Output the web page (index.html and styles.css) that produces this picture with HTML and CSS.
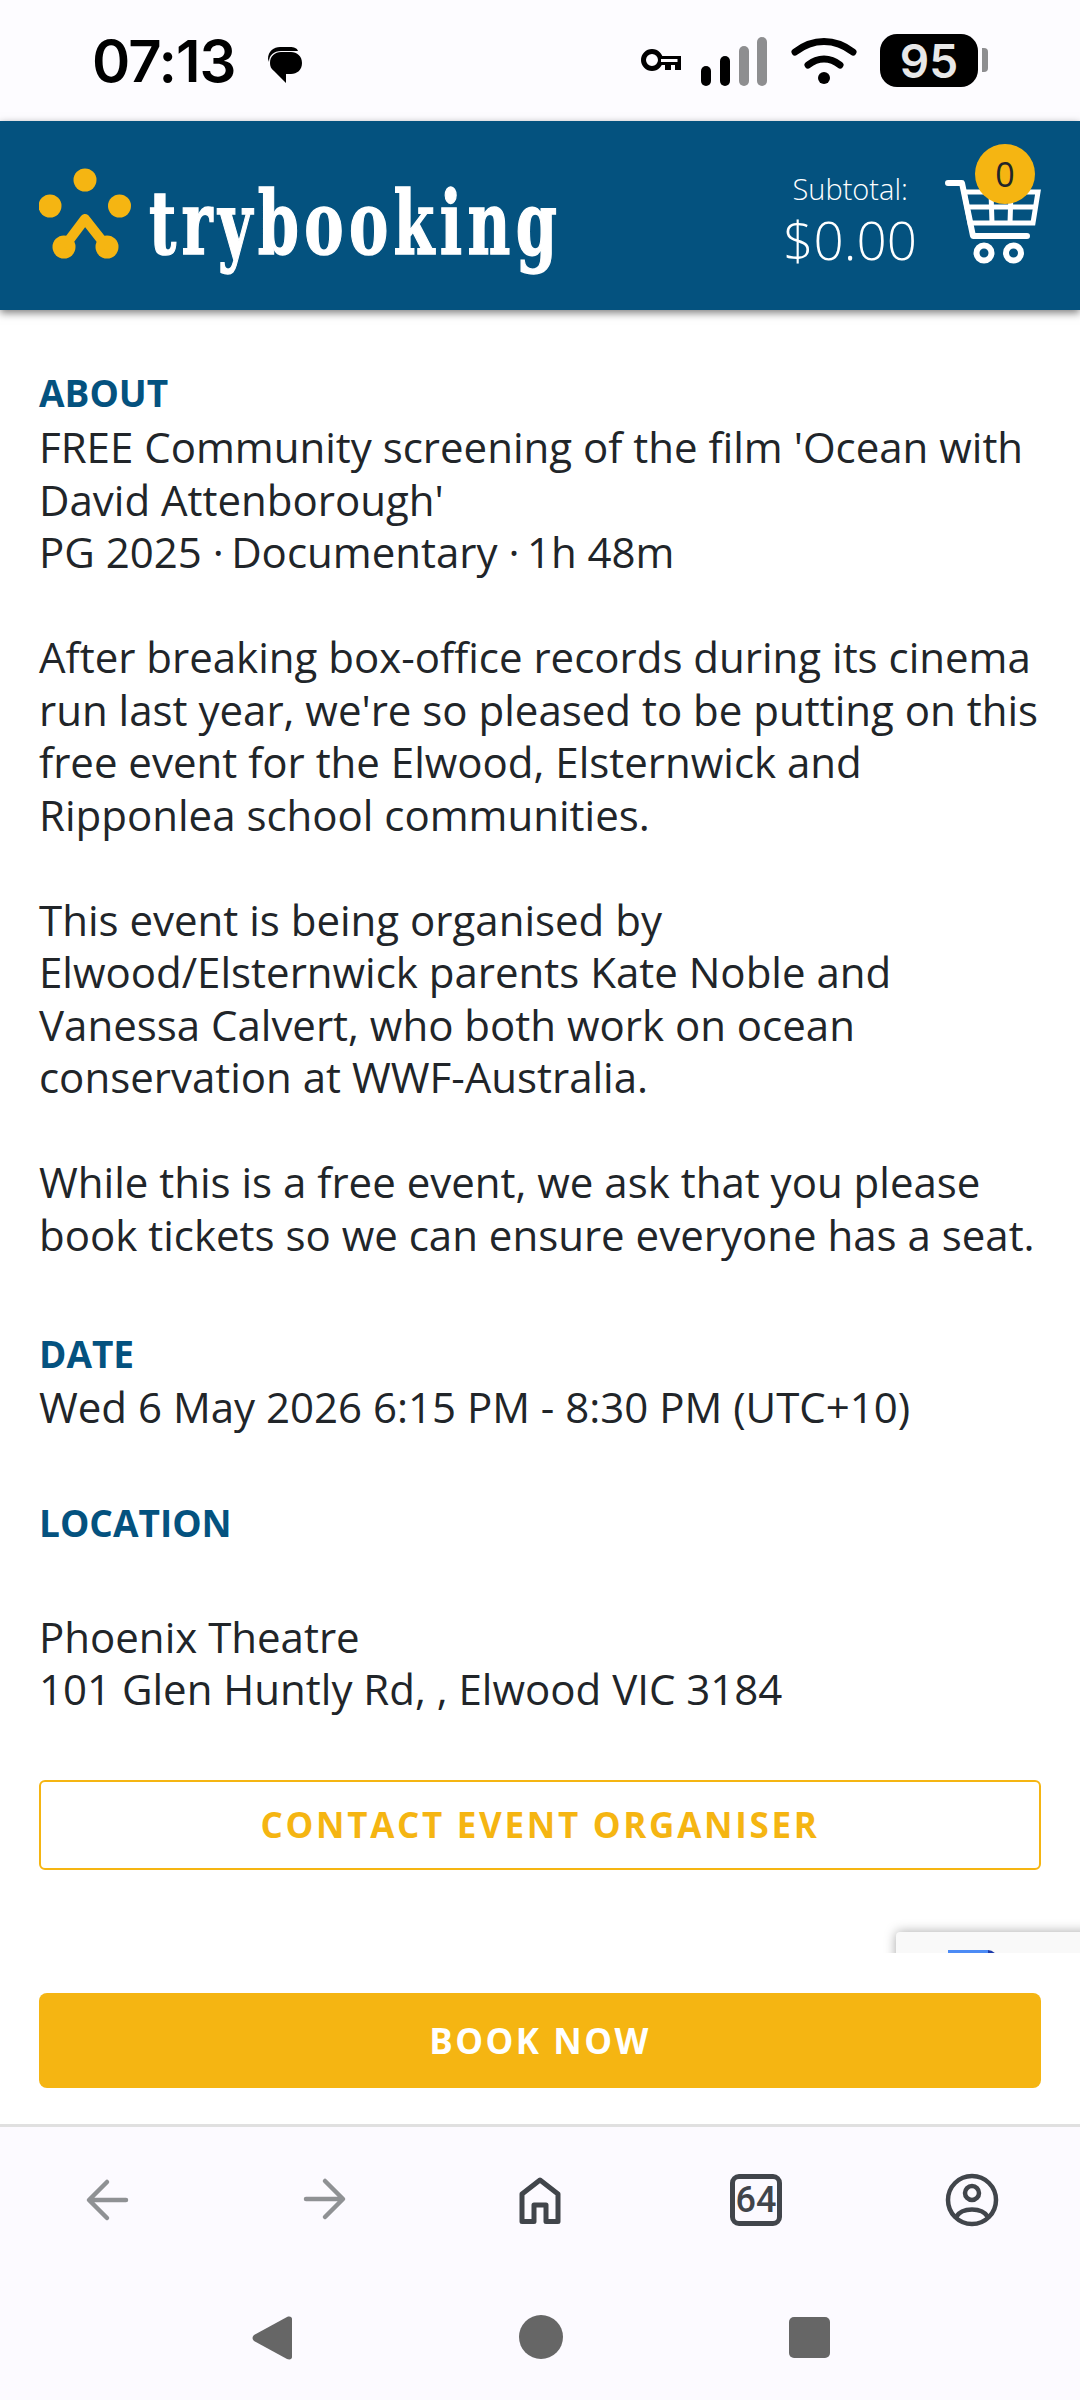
FILE: index.html
```html
<!DOCTYPE html>
<html>
<head>
    <meta charset="UTF-8">
    <title>Ocean with David Attenborough - trybooking</title>
    <link rel="stylesheet" href="styles.css">
</head>
<body>
    <div class="statusbar">
        <div class="status-left">
            <span class="clock">07:13</span>
            <svg class="msg-icon" width="38" height="38" viewBox="0 0 38 38">
                <path d="M3 14C3 6 9 2 15 2H25C29 2 32 3 33 6H16C9 6 4 10 4 17Z" fill="#000"/>
                <path d="M5 18C5 11 10 7 16 7H26C32 7 37 11 37 18C37 25 32 29 26 29H21V38L9 26C6 24 5 21 5 18Z" fill="#000"/>
            </svg>
        </div>
        <div class="status-right">
            <svg class="key-icon" width="42" height="26" viewBox="0 0 42 26">
                <circle cx="12" cy="12" r="8.500" fill="none" stroke="#000" stroke-width="5"/>
                <path d="M20 8H41V22H35V17H31V22H25V17H20Z" fill="#000"/>
                <path d="M21 12.500H37.500" stroke="#fdfcff" stroke-width="3"/>
            </svg>
            <svg class="signal-icon" width="68" height="50" viewBox="0 0 68 50">
                <rect x="1" y="29" width="10" height="20" rx="5" fill="#000"/>
                <rect x="20" y="19" width="10" height="30" rx="5" fill="#000"/>
                <rect x="39" y="9" width="10" height="40" rx="5" fill="#8e8e90"/>
                <rect x="57" y="0" width="10" height="49" rx="5" fill="#8e8e90"/>
            </svg>
            <svg class="wifi-icon" width="66" height="48" viewBox="0 0 66 48">
                <path d="M4 15C22 1 44 1 62 15" fill="none" stroke="#000" stroke-width="7" stroke-linecap="round"/>
                <path d="M17 28C27 20 39 20 49 28" fill="none" stroke="#000" stroke-width="7" stroke-linecap="round"/>
                <circle cx="33" cy="41" r="6" fill="#000"/>
            </svg>
            <div class="battery">
                <span class="battery-level">95</span>
                <span class="battery-nub"></span>
            </div>
        </div>
    </div>

    <div class="header">
        <div class="logo">
            <svg class="logo-mark" width="96" height="96" viewBox="0 0 96 96">
                <circle cx="46" cy="12" r="11.500" fill="#f5b512"/>
                <circle cx="11" cy="38" r="11.500" fill="#f5b512"/>
                <circle cx="80.500" cy="38" r="11.500" fill="#f5b512"/>
                <circle cx="25" cy="79" r="11.500" fill="#f5b512"/>
                <circle cx="68" cy="79" r="11.500" fill="#f5b512"/>
                <path d="M25 79L46 51L68 79" fill="none" stroke="#f5b512" stroke-width="10" stroke-linejoin="round"/>
            </svg>
            <span class="logo-text">trybooking</span>
        </div>
        <div class="cart-area">
            <div class="subtotal">
                <span class="subtotal-label">Subtotal:</span>
                <span class="subtotal-value">$0.00</span>
            </div>
            <div class="cart">
                <svg width="96" height="88" viewBox="0 0 96 88">
                    <path d="M3 4H17L28 57H82" fill="none" stroke="#fff" stroke-width="6" stroke-linecap="round" stroke-linejoin="round"/>
                    <path d="M19 13H93L88 44H25Z" fill="none" stroke="#fff" stroke-width="5"/>
                    <path d="M22 28H91M46 13L47 44M66 13L65 44" fill="none" stroke="#fff" stroke-width="5"/>
                    <circle cx="39" cy="74" r="7.500" fill="none" stroke="#fff" stroke-width="6"/>
                    <circle cx="68.500" cy="74" r="7.500" fill="none" stroke="#fff" stroke-width="6"/>
                </svg>
                <span class="cart-badge">0</span>
            </div>
        </div>
    </div>

    <div class="content">
        <div class="section section-about">
            <div class="label">ABOUT</div>
            <p>FREE Community screening of the film 'Ocean with David Attenborough'<br>PG 2025 <span class="dot">·</span> Documentary <span class="dot">·</span> 1h 48m</p>
            <p>After breaking box-office records during its cinema run last year, we're so pleased to be putting on this free event for the Elwood, Elsternwick and Ripponlea school communities.</p>
            <p>This event is being organised by<br>Elwood/Elsternwick parents Kate Noble and Vanessa Calvert, who both work on ocean conservation at WWF-Australia.</p>
            <p>While this is a free event, we ask that you please book tickets so we can ensure everyone has a seat.</p>
        </div>
        <div class="section">
            <div class="label">DATE</div>
            <p>Wed 6 May 2026 6:15 PM - 8:30 PM (UTC+10)</p>
        </div>
        <div class="section">
            <div class="label label-location">LOCATION</div>
            <p>Phoenix Theatre<br>101 Glen Huntly Rd, , Elwood VIC 3184</p>
        </div>
        <a class="btn-outline">CONTACT EVENT ORGANISER</a>
        <div class="recaptcha"><span class="recaptcha-blue"></span><span class="recaptcha-dark"></span></div>
    </div>

    <div class="book-bar">
        <a class="btn-book">BOOK NOW</a>
    </div>

    <div class="browser-nav">
        <svg class="nav-icon" width="60" height="60" viewBox="0 0 60 60">
            <path d="M48 30H12M29 12L11 30L29 48" fill="none" stroke="#8f9194" stroke-width="4.500" stroke-linecap="round" stroke-linejoin="round"/>
        </svg>
        <svg class="nav-icon" width="60" height="60" viewBox="0 0 60 60">
            <path d="M12 29H48M31 11L49 29L31 47" fill="none" stroke="#8f9194" stroke-width="4.500" stroke-linecap="round" stroke-linejoin="round"/>
        </svg>
        <svg class="nav-icon" width="60" height="60" viewBox="0 0 60 60">
            <path d="M12 51.500V24L30 10L48 24V51.500H36V35H24V51.500Z" fill="none" stroke="#41454b" stroke-width="5" stroke-linejoin="round"/>
        </svg>
        <div class="tab-count">64</div>
        <svg class="nav-icon" width="60" height="60" viewBox="0 0 60 60">
            <circle cx="30" cy="30" r="24" fill="none" stroke="#41454b" stroke-width="4.500"/>
            <circle cx="30" cy="23" r="7" fill="none" stroke="#41454b" stroke-width="4.500"/>
            <path d="M14 47C20 37 40 37 46 47" fill="none" stroke="#41454b" stroke-width="4.500"/>
        </svg>
    </div>

    <div class="system-nav">
        <svg width="42" height="46" viewBox="0 0 42 46"><path d="M36 2L3 20C1 22 1 24 3 26L36 44C39 45 41 44 41 42V4C41 2 39 1 36 2Z" fill="#666"/></svg>
        <span class="sys-circle"></span>
        <span class="sys-square"></span>
    </div>
</body>
</html>
```

FILE: styles.css
```css
* {
    box-sizing: border-box;
}
body {
    margin: 0;
    width: 1080px;
    height: 2400px;
    overflow: hidden;
    display: flex;
    flex-direction: column;
    background-color: #fff;
    color: #212529;
    font-family: "Open Sans", sans-serif;
}
.statusbar {
    height: 121px;
    flex-shrink: 0;
    background-color: #fdfcff;
    display: flex;
    justify-content: space-between;
    align-items: center;
    padding: 0 102px 0 92px;
}
.status-left {
    display: flex;
    align-items: center;
    gap: 29px;
}
.clock {
    font-family: Inter, sans-serif;
    font-weight: 600;
    font-size: 58px;
    letter-spacing: -1px;
    color: #000;
}
.msg-icon {
    margin-top: 6px;
}
.status-right {
    display: flex;
    align-items: center;
}
.key-icon {
    margin-right: 18px;
}
.signal-icon {
    margin-right: 23px;
    margin-top: 3px;
}
.wifi-icon {
    margin-right: 23px;
    margin-top: 1px;
}
.battery {
    width: 98px;
    height: 53px;
    background-color: #000;
    border-radius: 17px;
    position: relative;
    display: flex;
    align-items: center;
    justify-content: center;
}
.battery-level {
    font-family: Inter, sans-serif;
    font-weight: 600;
    font-size: 46px;
    color: #e8e8e8;
}
.battery-nub {
    position: absolute;
    right: -10px;
    top: 14px;
    width: 6px;
    height: 24px;
    background-color: #8e8e90;
    border-radius: 0 4px 4px 0;
}
.header {
    height: 189px;
    flex-shrink: 0;
    background-color: #04527f;
    box-shadow: 0 3px 8px rgba(0,0,0,0.5);
    display: flex;
    justify-content: space-between;
    align-items: center;
    padding: 0 39px;
    position: relative;
    z-index: 2;
}
.logo {
    display: flex;
    align-items: center;
    gap: 14px;
}
.logo-text {
    display: inline-block;
    font-family: "DejaVu Serif", serif;
    font-weight: 700;
    font-size: 88px;
    letter-spacing: 8px;
    color: #fff;
    -webkit-text-stroke: 1.500px #fff;
    line-height: 1;
    margin-top: 14px;
    transform: scaleX(0.67);
    transform-origin: left center;
}
.cart-area {
    display: flex;
    align-items: center;
    gap: 28px;
}
.subtotal {
    display: flex;
    flex-direction: column;
    align-items: center;
    color: #fff;
    font-weight: 300;
    margin-top: 10px;
}
.subtotal-label {
    font-size: 29px;
    line-height: 38px;
}
.subtotal-value {
    font-size: 53px;
    line-height: 63px;
}
.cart {
    position: relative;
    height: 88px;
    margin-top: 14px;
}
.cart-badge {
    position: absolute;
    top: -35px;
    left: 30px;
    width: 60px;
    height: 60px;
    border-radius: 50%;
    background-color: #f5b512;
    color: #212529;
    font-size: 34px;
    line-height: 60px;
    text-align: center;
}
.content {
    flex: 1;
    position: relative;
    overflow: hidden;
    padding: 57px 39px 0;
    font-size: 42px;
    line-height: 52.500px;
}
.section {
    margin-bottom: 64px;
}
.section-about {
    margin-bottom: 67px;
}
.section-about .label {
    margin-bottom: 1.500px;
}
.section p {
    margin: 0 0 52.500px;
}
.section p:last-child {
    margin-bottom: 0;
}
.dot {
    letter-spacing: -3.500px;
}
.label {
    font-size: 37px;
    font-weight: 700;
    color: #04527f;
}
.label-location {
    margin-bottom: 61px;
}
.btn-outline {
    display: block;
    height: 90px;
    line-height: 86px;
    border: 2px solid #f5b512;
    border-radius: 6px;
    text-align: center;
    color: #f5b512;
    font-size: 35px;
    font-weight: 700;
    letter-spacing: 2.700px;
}
.recaptcha {
    position: absolute;
    left: 896px;
    top: 1622px;
    width: 256px;
    height: 60px;
    background-color: #f9f9f9;
    border-radius: 4px;
    box-shadow: 0 0 12px rgba(0,0,0,0.35);
}
.recaptcha-blue {
    position: absolute;
    left: 52px;
    top: 18px;
    width: 40px;
    height: 40px;
    background-color: #4c8bf5;
}
.recaptcha-dark {
    position: absolute;
    left: 92px;
    top: 18px;
    width: 18px;
    height: 40px;
    background-color: #1c3aa9;
    border-radius: 0 100% 0 0;
}
.book-bar {
    height: 174px;
    flex-shrink: 0;
    background-color: #fff;
    border-bottom: 3px solid #e0e0e0;
    padding: 40px 39px 0;
    position: relative;
}
.btn-book {
    display: block;
    height: 95px;
    line-height: 95px;
    background-color: #f5b512;
    border-radius: 8px;
    text-align: center;
    color: #fff;
    font-size: 35px;
    font-weight: 700;
    letter-spacing: 2.500px;
}
.browser-nav {
    height: 158px;
    flex-shrink: 0;
    background-color: #fcfaff;
    display: flex;
    justify-content: space-around;
    align-items: center;
    padding-bottom: 12px;
}
.nav-icon {
    display: block;
}
.tab-count {
    width: 52px;
    height: 52px;
    border: 5px solid #41454b;
    border-radius: 9px;
    text-align: center;
    font-family: Roboto, sans-serif;
    font-weight: 500;
    font-size: 36px;
    line-height: 42px;
    color: #41454b;
    margin: 0 4px;
}
.system-nav {
    height: 115px;
    flex-shrink: 0;
    background-color: #fcfaff;
    display: flex;
    justify-content: center;
    align-items: flex-start;
    padding-top: 30px;
    gap: 226px;
}
.sys-circle {
    width: 44px;
    height: 44px;
    border-radius: 50%;
    background-color: #666;
}
.sys-square {
    width: 41px;
    height: 41px;
    margin-top: 2px;
    border-radius: 5px;
    background-color: #666;
}
```
